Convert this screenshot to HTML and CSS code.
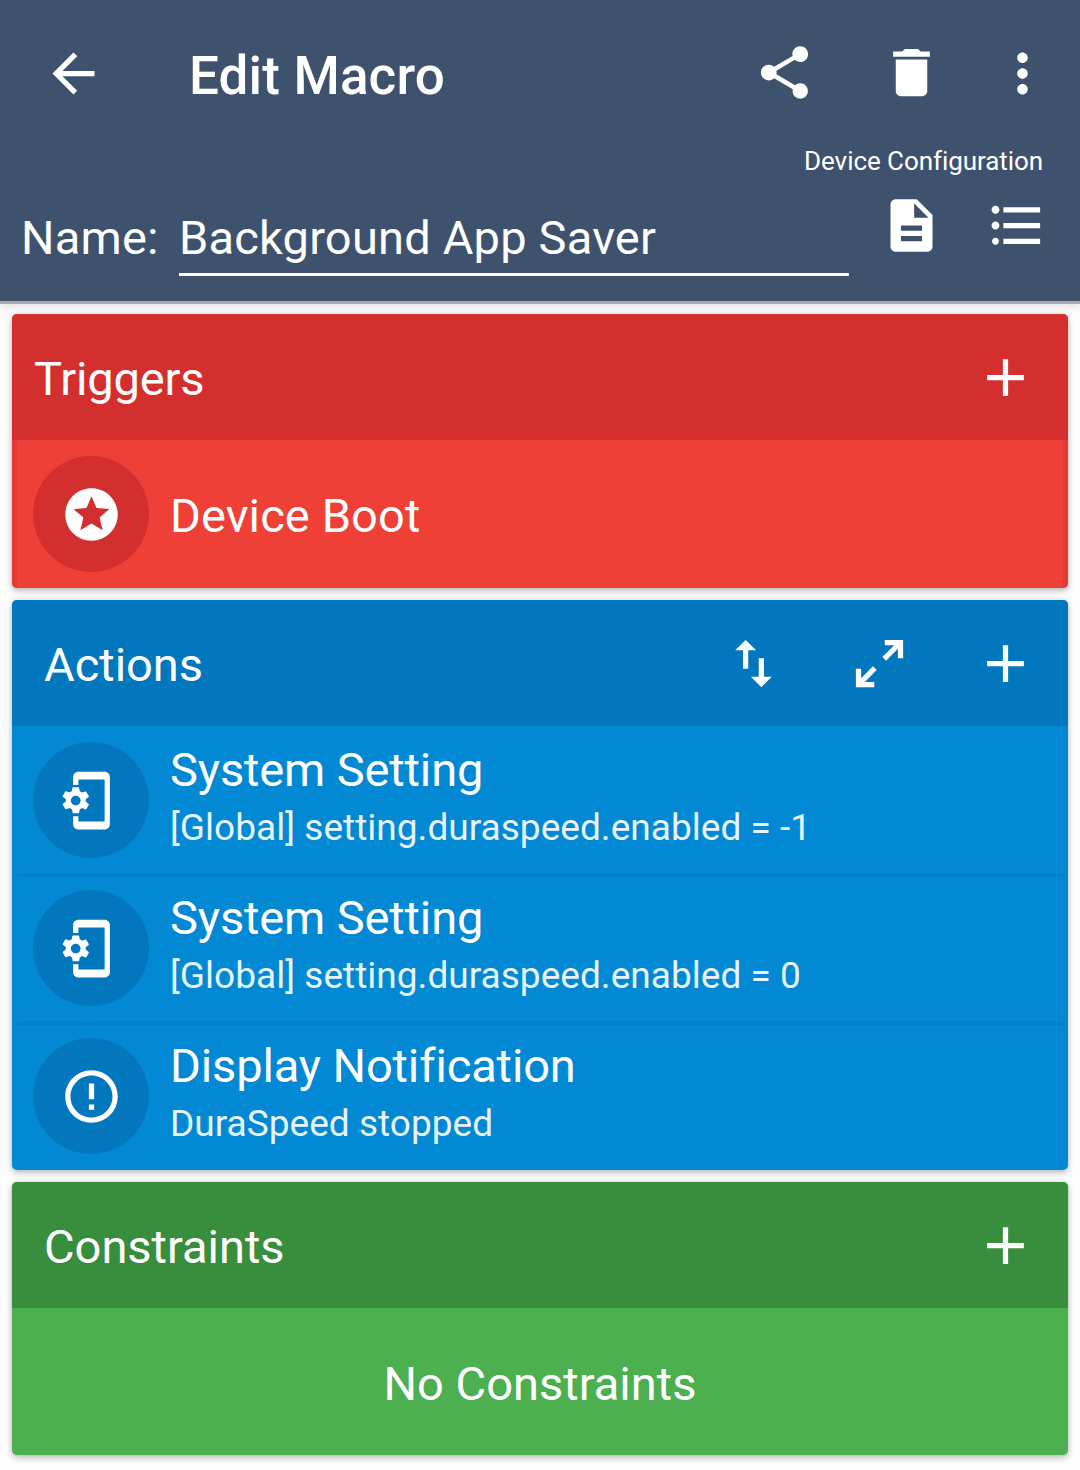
FILE: index.html
```html
<!DOCTYPE html>
<html lang="en">
<head>
<meta charset="utf-8">
<title>Edit Macro</title>
<link rel="stylesheet" href="styles.css">
</head>
<body>
<svg class="defs" width="0" height="0">
  <symbol id="plus" viewBox="0 0 24 24"><path d="M19 13h-6v6h-2v-6H5v-2h6V5h2v6h6v2z"/></symbol>
  <symbol id="phone-gear" viewBox="2 0 24 24"><path d="M11.8 12.5v-1l1.1-.8c.1-.1.1-.2.1-.3l-1-1.7c-.1-.1-.2-.2-.3-.1l-1.3.4c-.3-.2-.6-.4-.9-.5l-.2-1.3c0-.1-.1-.2-.3-.2H7c-.1 0-.2.1-.3.2l-.2 1.3c-.3.1-.6.3-.9.5l-1.3-.5c-.1 0-.2 0-.3.1l-1 1.7c-.1.1 0 .2.1.3l1.1.8v1l-1.1.8c-.1.1-.2.2-.1.3l1 1.7c.1.1.2.2.3.1l1.4-.4c.3.2.6.4.9.5l.2 1.3c-.1.1.1.2.2.2h2c.1 0 .2-.1.3-.2l.2-1.3c.3-.1.6-.3.9-.5l1.3.5c.1 0 .2 0 .3-.1l1-1.7c.1-.1 0-.2-.1-.3l-1.1-.9zM8 13.85c-1.02 0-1.85-.83-1.85-1.85S6.98 10.15 8 10.15s1.85.83 1.85 1.85-.83 1.85-1.85 1.85zM19 1H9c-1.1 0-2 .9-2 2v3.1h2V4h10v16H9v-2H7v3c0 1.1.9 2 2 2h10c1.1 0 2-.9 2-2V3c0-1.1-.9-2-2-2z"/></symbol>
</svg>

<header class="app-bar">
  <div class="toolbar">
    <svg class="icon" viewBox="0 0 24 24"><path d="M20 11H7.83l5.59-5.59L12 4l-8 8 8 8 1.41-1.41L7.83 13H20v-2z"/></svg>
    <h1 class="title">Edit Macro</h1>
    <svg class="icon icon-share" viewBox="0 0 24 24"><path d="M18 16.08c-.76 0-1.44.3-1.96.77L8.91 12.7c.05-.23.09-.46.09-.7s-.04-.47-.09-.7l7.05-4.11c.54.5 1.25.81 2.04.81 1.66 0 3-1.34 3-3s-1.34-3-3-3-3 1.34-3 3c0 .24.04.47.09.7L8.04 9.81C7.5 9.31 6.79 9 6 9c-1.66 0-3 1.34-3 3s1.34 3 3 3c.79 0 1.5-.31 2.04-.81l7.12 4.16c-.05.21-.08.43-.08.65 0 1.61 1.31 2.92 2.92 2.92 1.61 0 2.92-1.31 2.92-2.92s-1.31-2.92-2.92-2.92z"/></svg>
    <svg class="icon icon-delete" viewBox="0 0 24 24"><path d="M6 19c0 1.1.9 2 2 2h8c1.1 0 2-.9 2-2V7H6v12zM19 4h-3.500l-1-1h-5l-1 1H5v2h14V4z"/></svg>
    <svg class="icon icon-more" viewBox="0 0 24 24"><path d="M12 8c1.1 0 2-.9 2-2s-.9-2-2-2-2 .9-2 2 .9 2 2 2zm0 2c-1.1 0-2 .9-2 2s.9 2 2 2 2-.9 2-2-.9-2-2-2zm0 6c-1.1 0-2 .9-2 2s.9 2 2 2 2-.9 2-2-.9-2-2-2z"/></svg>
  </div>
  <div class="category">Device Configuration</div>
  <div class="name-row">
    <span class="name-label">Name:</span>
    <div class="name-field"><span class="name-value">Background App Saver</span></div>
    <svg class="icon icon-doc" viewBox="0 0 24 24"><path d="M14 2H6c-1.1 0-1.99.9-1.990 2L4 20c0 1.1.89 2 1.990 2H18c1.1 0 2-.9 2-2V8l-6-6zm2 16H8v-2h8v2zm0-4H8v-2h8v2zm-3-5V3.500L18.500 9H13z"/></svg>
    <svg class="icon icon-list" viewBox="0 0 24 24"><path d="M4 10.500c-.83 0-1.500.67-1.500 1.500s.67 1.500 1.500 1.500 1.500-.67 1.500-1.500-.67-1.500-1.500-1.500zm0-6c-.83 0-1.500.67-1.500 1.500S3.170 7.500 4 7.500 5.500 6.830 5.500 6 4.830 4.500 4 4.500zm0 12.170c-.74 0-1.330.6-1.330 1.330s.6 1.330 1.330 1.330 1.330-.6 1.330-1.330-.59-1.330-1.330-1.330zM7 19h14v-2H7v2zm0-6h14v-2H7v2zm0-8v2h14V5H7z"/></svg>
  </div>
</header>

<main class="cards">
  <section class="card triggers">
    <div class="card-head">
      <h2 class="card-title">Triggers</h2>
      <svg class="icon"><use href="#plus"/></svg>
    </div>
    <div class="item">
      <div class="badge"><svg class="icon" viewBox="0 0 24 24"><path d="M11.990 2C6.470 2 2 6.480 2 12s4.470 10 9.990 10C17.520 22 22 17.520 22 12S17.520 2 11.990 2zm4.240 16L12 15.450 7.770 18l1.120-4.810-3.730-3.230 4.920-.42L12 5l1.920 4.530 4.920.42-3.730 3.230L16.230 18z"/></svg></div>
      <div class="item-text"><div class="item-title">Device Boot</div></div>
    </div>
  </section>

  <section class="card actions">
    <div class="card-head">
      <h2 class="card-title">Actions</h2>
      <svg class="icon" viewBox="0 0 24 24"><path d="M9 3L5 6.990h3V14h2V6.990h3L9 3zm7 14.010V10h-2v7.010h-3L15 21l4-3.990h-3z"/></svg>
      <svg class="icon" viewBox="0 0 24 24"><path d="M10 21v-2H6.410l4.500-4.500-1.410-1.410-4.500 4.500V14H3v7h7zM14.500 10.910L19 6.410V10h2V3h-7v2h3.590l-4.500 4.500 1.410 1.410z"/></svg>
      <svg class="icon"><use href="#plus"/></svg>
    </div>
    <div class="item">
      <div class="badge"><svg class="icon"><use href="#phone-gear"/></svg></div>
      <div class="item-text"><div class="item-title">System Setting</div><div class="item-detail">[Global] setting.duraspeed.enabled = -1</div></div>
    </div>
    <div class="item">
      <div class="badge"><svg class="icon"><use href="#phone-gear"/></svg></div>
      <div class="item-text"><div class="item-title">System Setting</div><div class="item-detail">[Global] setting.duraspeed.enabled = 0</div></div>
    </div>
    <div class="item">
      <div class="badge"><svg class="icon" viewBox="0 0 24 24"><path d="M11 15h2v2h-2zm0-8h2v6h-2zm.99-5C6.470 2 2 6.480 2 12s4.470 10 9.990 10C17.520 22 22 17.520 22 12S17.520 2 11.990 2zM12 20c-4.420 0-8-3.580-8-8s3.580-8 8-8 8 3.580 8 8-3.580 8-8 8z"/></svg></div>
      <div class="item-text"><div class="item-title">Display Notification</div><div class="item-detail">DuraSpeed stopped</div></div>
    </div>
  </section>

  <section class="card constraints">
    <div class="card-head">
      <h2 class="card-title">Constraints</h2>
      <svg class="icon"><use href="#plus"/></svg>
    </div>
    <div class="empty">No Constraints</div>
  </section>
</main>
</body>
</html>
```
FILE: styles.css
```css
* { box-sizing: border-box; }

body {
  margin: 0;
  height: 1470px;
  overflow: hidden;
  background: #fdfdfd;
  color: #fff;
  font-family: Roboto, sans-serif;
  font-size: 47px;
}

h1, h2 { margin: 0; font-size: inherit; font-weight: 400; }

.defs { display: block; position: absolute; }

.icon { display: block; flex: none; width: 63px; height: 63px; fill: #fff; }

/* Header */
.app-bar {
  height: 304px;
  background: #3f526d;
  border-bottom: 3px solid #acacac;
  box-shadow: 0 2px 8px rgba(0, 0, 0, .12);
}

.toolbar { display: flex; align-items: center; height: 147px; padding: 0 26px 0 42px; }
.title { flex: 1; margin-left: 84px; padding-top: 4px; font-size: 53px; font-weight: 500; letter-spacing: .15px; line-height: 62px; }
.icon-share { margin: 0 64px 2px 0; }
.icon-delete { margin: 0 48px 2px 0; }

.category { height: 47px; padding-right: 37px; text-align: right; font-size: 26px; letter-spacing: -.07px; line-height: 29px; }

.name-row { display: flex; align-items: flex-start; height: 82px; padding: 0 32px 0 21px; }
.name-label { width: 158px; letter-spacing: .2px; line-height: 87px; white-space: nowrap; }
.name-field { width: 670px; height: 82px; border-bottom: 3px solid #fff; letter-spacing: .2px; line-height: 87px; white-space: nowrap; }
.icon-doc { margin-left: 31px; }
.icon-list { margin-left: 42px; }

/* Cards */
.cards { display: flex; flex-direction: column; gap: 12px; padding: 10px 12px 0; }

.card {
  overflow: hidden;
  border-radius: 5px;
  background: var(--body);
  box-shadow: 0 3px 7px rgba(0, 0, 0, .24), 0 0 4px rgba(0, 0, 0, .1);
}
.triggers { --head: #d32f2f; --body: #ee4036; --line: #e53935; }
.actions { --head: #0277bd; --body: #0389d3; --line: #0280c6; }
.constraints { --head: #398e3d; --body: #4caf50; }

.card-head { display: flex; align-items: center; gap: 63px; height: 126px; padding: 0 31px 0 32px; background: var(--head); }
.triggers .card-head { padding-left: 22px; }
.card-title { flex: 1; line-height: 56px; padding-top: 4px; }
.triggers .card-title { letter-spacing: -.15px; }

.item { display: flex; gap: 21px; height: 148px; padding: 16px 16px 0; margin: 0 5px; }
.item + .item { border-top: 3px solid var(--line); padding-top: 13px; }
.triggers .item { margin: 0; border: solid var(--line); border-width: 0 5px; }
.badge { display: flex; align-items: center; justify-content: center; flex: none; width: 116px; height: 116px; border-radius: 50%; background: var(--head); }
.item-text { display: flex; flex-direction: column; height: 116px; white-space: nowrap; }
.item-title { line-height: 56px; letter-spacing: -.12px; }
.triggers .item-title { padding-top: 32px; letter-spacing: .12px; }
.item-detail { font-size: 37px; line-height: 44px; padding-top: 8px; letter-spacing: .03px; color: rgba(255, 255, 255, .93); }

.empty { height: 147px; line-height: 151px; text-align: center; letter-spacing: .04px; }
```
